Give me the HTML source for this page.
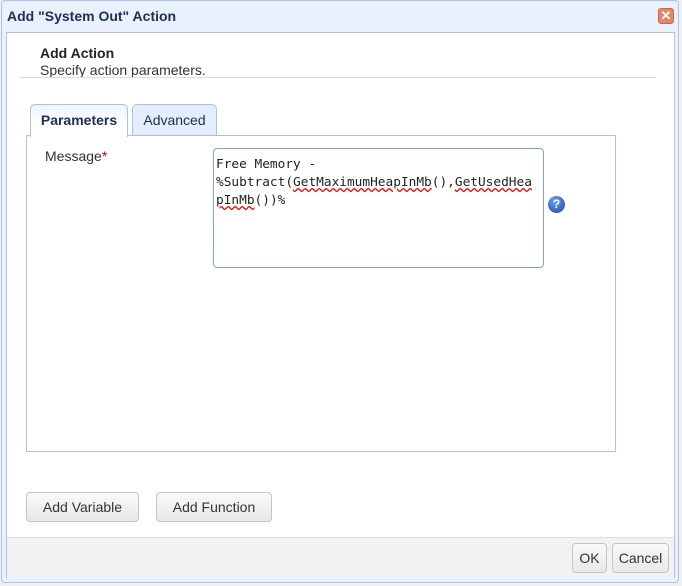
<!DOCTYPE html>
<html><head><style>
body{margin:0;width:682px;height:586px;background:#f0f0f0;font-family:"Liberation Sans",sans-serif;position:relative;overflow:hidden}
.a{position:absolute}
.btn{position:absolute;border:1px solid #c5c5c5;border-radius:4px;background:linear-gradient(#fafafa,#e8e8e8);font-size:14px;color:#333;text-align:center;box-sizing:border-box}
</style></head><body>
<div class="a" style="left:1px;top:0;width:678px;height:583px;border:1px solid #a9c3ea;border-radius:4px;background:#e9f1fc;box-sizing:border-box"></div>
<div class="a" style="left:7px;top:8px;font-size:14px;font-weight:bold;color:#1d2f55">Add "System Out" Action</div>
<div class="a" style="left:658px;top:8px;width:16px;height:16px;border-radius:3px;background:#e0876a;border:1px solid #c86a50;box-sizing:border-box;color:#fff;font-size:13px;font-weight:bold;line-height:14px;text-align:center">✕</div>
<div class="a" style="left:6px;top:32px;width:669px;height:546px;border:1px solid #a9c3ea;background:#fff;box-sizing:border-box"></div>
<div class="a" style="left:7px;top:537px;width:667px;height:40px;background:#f2f2f2;border-top:1px solid #ddd"></div>
<div class="a" style="left:40px;top:45px;font-size:14px;font-weight:bold;color:#222">Add Action</div>
<div class="a" style="left:40px;top:62px;font-size:14px;color:#333">Specify action parameters.</div>
<div class="a" style="left:20px;top:77px;width:636px;height:1px;background:#ddd"></div>
<div class="a" style="left:26px;top:135px;width:590px;height:317px;border:1px solid #a9c3ea;box-sizing:border-box"></div>
<div class="a" style="left:30px;top:104px;width:98px;height:33px;border:1px solid #a9c3ea;border-bottom:none;border-radius:5px 5px 0 0;background:linear-gradient(#eef4fd,#fff 60%);box-sizing:border-box;font-size:14px;font-weight:bold;color:#1d2f55;text-align:center;line-height:31px">Parameters</div>
<div class="a" style="left:132px;top:104px;width:85px;height:31px;border:1px solid #a9c3ea;border-bottom:none;border-radius:5px 5px 0 0;background:#e3edfb;box-sizing:border-box;font-size:14px;color:#1d2f55;text-align:center;line-height:31px">Advanced</div>
<div class="a" style="left:45px;top:148px;font-size:14px;color:#333">Message<span style="color:#c00">*</span></div>
<div class="a" style="left:213px;top:148px;width:331px;height:120px;border:1px solid #7fa3d8;border-radius:4px;box-sizing:border-box;padding:7px 2px;font-family:'DejaVu Sans Mono','Liberation Mono',monospace;font-size:12.8px;line-height:18px;color:#222;white-space:nowrap">Free Memory -<br>%Subtract(<u style="text-decoration:underline wavy #e00">GetMaximumHeapInMb</u>(),<u style="text-decoration:underline wavy #e00">GetUsedHea</u><br><u style="text-decoration:underline wavy #e00">pInMb</u>())%</div>
<div class="a" style="left:548px;top:196px;width:17px;height:17px;border-radius:50%;background:radial-gradient(circle at 40% 30%,#6da0f0,#1948a8);color:#fff;font-size:12px;font-weight:bold;text-align:center;line-height:17px">?</div>
<div class="btn" style="left:26px;top:492px;width:113px;height:30px;line-height:28px">Add Variable</div>
<div class="btn" style="left:156px;top:492px;width:116px;height:30px;line-height:28px">Add Function</div>
<div class="btn" style="left:572px;top:543px;width:35px;height:30px;line-height:28px">OK</div>
<div class="btn" style="left:612px;top:543px;width:57px;height:30px;line-height:28px">Cancel</div>
</body></html>
